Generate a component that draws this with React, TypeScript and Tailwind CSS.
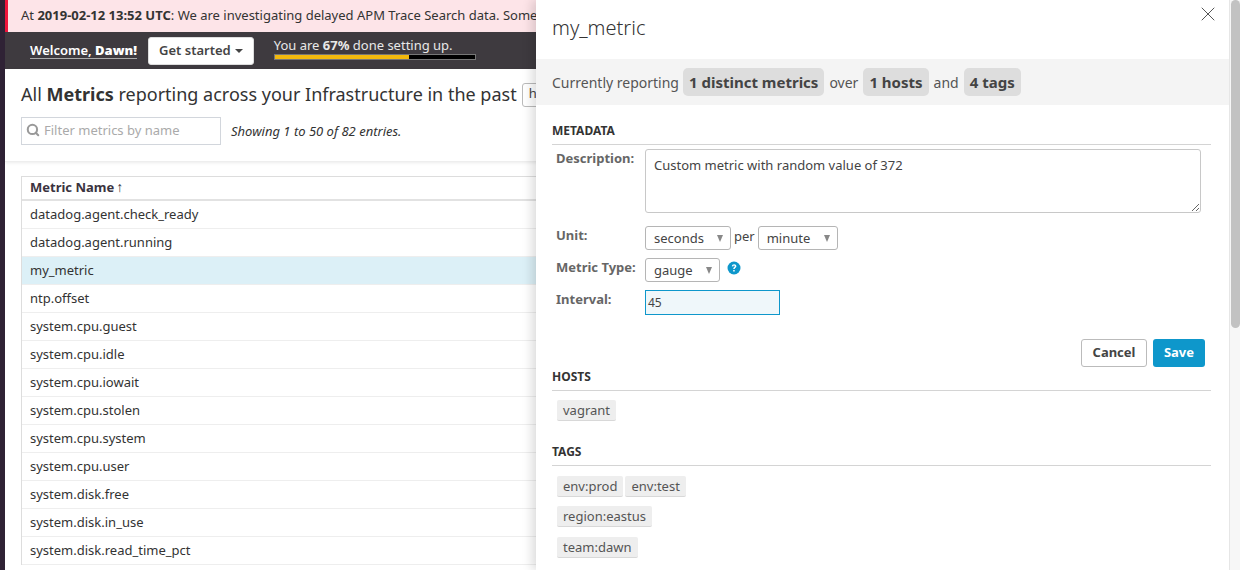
import { Search, X } from "lucide-react";

const metrics = [
  "datadog.agent.check_ready",
  "datadog.agent.running",
  "my_metric",
  "ntp.offset",
  "system.cpu.guest",
  "system.cpu.idle",
  "system.cpu.iowait",
  "system.cpu.stolen",
  "system.cpu.system",
  "system.cpu.user",
  "system.disk.free",
  "system.disk.in_use",
  "system.disk.read_time_pct",
];

function Select({ value, width }: { value: string; width: string }) {
  return (
    <div className={`flex h-6 ${width} items-center justify-between rounded-[3px] border border-[#b5b5b5] bg-white pl-[8px] pr-[7px] text-[13px] text-[#444]`}>
      <span className="mt-[1px]">{value}</span>
      <span className="mt-[1px] h-0 w-0 border-x-[3px] border-t-[7px] border-x-transparent border-t-[#888]" />
    </div>
  );
}

function Tag({ label }: { label: string }) {
  return (
    <span className="h-[21px] rounded-[2px] border-b border-[#d8d8d8] bg-[#eeeeee] px-[6px] text-[13px] leading-[20px] text-[#555]">
      {label}
    </span>
  );
}

function Pill({ label }: { label: string }) {
  return <span className="rounded-[5px] bg-[#dddddd] px-[6px] py-[3px] text-[15px] font-bold text-[#444]">{label}</span>;
}

function SectionHead({ title }: { title: string }) {
  return <h3 className="border-b border-[#d4d4d4] pt-[1px] pb-[4px] text-[12px] leading-[18px] font-bold text-[#333]">{title}</h3>;
}

function MetricsList() {
  return (
    <div className="relative h-full w-[536px] shrink-0 overflow-hidden bg-white">
      <div className="flex h-full">
        <div className="w-[5px] shrink-0 bg-[#2f2235]" />
        <div className="w-[700px] shrink-0">
          <div className="h-8 border-l-[3px] border-[#f0143c] bg-[#fde4e8] pl-[13px] text-[13px] leading-[30px] text-[#333]">
            At <b>2019-02-12 13:52 UTC</b>: We are investigating delayed APM Trace Search data. Some
          </div>
          <div className="flex h-[37px] items-center bg-[#3e3a3f] pl-[25px]">
            <span className="border-b border-[#aaa] text-[13px] leading-[16px] font-semibold text-white">
              Welcome, <b>Dawn!</b>
            </span>
            <button className="ml-[11px] flex h-[28px] items-center rounded-[3px] border border-[#ddd] bg-white px-[10px] text-[13px] font-semibold text-[#444]">
              Get started
              <span className="ml-[4px] h-0 w-0 border-x-[4px] border-t-[4px] border-x-transparent border-t-[#444]" />
            </button>
            <div className="ml-[20px] -mt-[5px]">
              <div className="text-[13px] leading-[18px] text-[#e8e8e8]">
                You are <b>67%</b> done setting up.
              </div>
              <div className="h-[6px] w-[202px] border border-[#777] bg-black">
                <div className="h-full w-[67%] bg-[#f2b90d]" />
              </div>
            </div>
          </div>
          <div className="h-[93px] border-b border-[#eeeeee] pl-[16px] shadow-[0_1px_3px_rgba(0,0,0,0.08)]">
            <div className="flex h-[48px] items-center pt-[2px]">
              <span className="text-[18px] text-[#333]">
                All <b>Metrics</b> reporting across your Infrastructure in the past
              </span>
              <span className="ml-[5px] mt-[2px] h-6 w-16 rounded-[3px] border border-[#bbb] pl-[6px] text-[13px] text-[#444]">h</span>
            </div>
            <div className="flex items-center">
              <div className="flex h-[28px] w-[200px] items-center border border-[#d2d6dc] pl-[4px]">
                <Search size={14} strokeWidth={3.5} className="-mt-[3px] text-[#999]" />
                <span className="ml-[4px] text-[13px] text-[#aaa]">Filter metrics by name</span>
              </div>
              <span className="ml-[10px] text-[13px] leading-[18px] text-[#333] italic">Showing 1 to 50 of 82 entries.</span>
            </div>
          </div>
          <div className="ml-[16px] mt-[14px] border border-b-0 border-[#dddddd]">
            <div className="flex h-[24px] items-center border-b-2 border-[#e2e2e2] pl-[8px] text-[13px] font-bold text-[#3a3340]">
              Metric Name
              <span className="ml-[2px] -mt-[4px] text-[14px] font-normal">↑</span>
            </div>
            {metrics.map((m) => (
              <div
                key={m}
                className={`h-[28px] border-b border-[#eeeeee] pl-[8px] text-[13px] leading-[27px] text-[#333] ${m === "my_metric" ? "bg-[#dcf0f7]" : ""}`}
              >
                {m}
              </div>
            ))}
          </div>
        </div>
      </div>
    </div>
  );
}

function DetailPanel() {
  return (
    <div className="relative z-10 flex h-full min-w-0 flex-1 overflow-hidden bg-white shadow-[-4px_0_10px_rgba(0,0,0,0.14)]">
      <div className="relative min-w-0 flex-1">
        <X size={24} strokeWidth={1} className="absolute top-[2px] right-[9px] text-[#555]" />
        <h2 className="h-[59px] pl-4 pt-[13px] text-[20px] leading-[30px] font-light text-[#333]">my_metric</h2>
        <div className="flex h-[46px] items-center gap-[5px] bg-[#f4f4f4] pl-4 text-[14px] text-[#555]">
          <span className="-mr-[1px]">Currently reporting</span>
          <Pill label="1 distinct metrics" />
          <span>over</span>
          <Pill label="1 hosts" />
          <span>and</span>
          <Pill label="4 tags" />
        </div>
        <div className="pl-4 pr-[18px] pt-[16px]">
          <SectionHead title="METADATA" />
          <div className="mt-[4px] grid grid-cols-[93px_1fr] text-[13px] font-bold text-[#666]">
            <div className="pl-[4px] leading-[18px]">Description:</div>
            <div className="relative mr-[10px] h-[64px] rounded-[3px] border border-[#c8c8c8] px-[8px] pt-[6px] text-[13px] font-normal leading-[18px] text-[#444]">
              Custom metric with random value of 372
              <svg width="8" height="8" viewBox="0 0 8 8" className="absolute right-[1px] bottom-[1px]">
                <path d="M1 8 L8 1 M5 8 L8 5" stroke="#666" strokeWidth="1" fill="none" />
              </svg>
            </div>
            <div className="mt-[13px] pl-[4px] leading-[18px]">Unit:</div>
            <div className="mt-[13px] flex h-6 items-center font-normal">
              <Select value="seconds" width="w-[86px]" />
              <span className="mx-[3px] -mt-[3px] text-[#444]">per</span>
              <Select value="minute" width="w-[80px]" />
            </div>
            <div className="mt-[8px] pl-[4px] leading-[18px]">Metric Type:</div>
            <div className="mt-[8px] flex h-6 items-start font-normal">
              <Select value="gauge" width="w-[75px]" />
              <svg width="14" height="14" viewBox="0 0 14 14" className="ml-[7px] mt-[3px]">
                <circle cx="7" cy="7" r="6.5" fill="#0e97cb" />
                <path d="M4.8 5.3 C4.9 3.9 6 3.2 7.1 3.2 C8.4 3.2 9.4 4 9.4 5.2 C9.4 6.6 7.7 6.7 7.7 8.1 L6.2 8.1 C6.2 6.2 7.8 6.2 7.8 5.3 C7.8 4.8 7.5 4.5 7 4.5 C6.5 4.5 6.2 4.9 6.2 5.4 Z M6.2 9 H7.7 V10.5 H6.2 Z" fill="#fff" />
              </svg>
            </div>
            <div className="mt-[8px] pl-[4px] leading-[18px]">Interval:</div>
            <div className="mt-[8px] flex h-[25px] w-[135px] items-center border border-[#0e97cb] bg-[#eff7fa] pl-[2px] text-[12px] font-normal text-[#444]">
              45
            </div>
          </div>
          <div className="mt-[24px] flex justify-end gap-[6px] pr-[6px]">
            <button className="h-7 w-[66px] rounded-[3px] border border-[#bbb] bg-white text-[13px] font-bold text-[#444]">Cancel</button>
            <button className="h-7 w-[52px] rounded-[3px] bg-[#0e97cb] text-[13px] font-bold text-white">Save</button>
          </div>
          <SectionHead title="HOSTS" />
          <div className="mt-[9px] flex pl-[5px]">
            <Tag label="vagrant" />
          </div>
          <div className="mt-[21px]">
            <SectionHead title="TAGS" />
          </div>
          <div className="mt-[10px] flex gap-[2px] pl-[5px]">
            <Tag label="env:prod" />
            <Tag label="env:test" />
          </div>
          <div className="mt-[9px] flex pl-[5px]">
            <Tag label="region:eastus" />
          </div>
          <div className="mt-[10px] flex pl-[5px]">
            <Tag label="team:dawn" />
          </div>
        </div>
      </div>
      <div className="w-[11px] shrink-0 border-l border-[#e6e6e6] bg-[#f7f7f7] pl-[1px]">
        <div className="h-[328px] w-[9px] rounded-full bg-[#c2c2c2]" />
      </div>
    </div>
  );
}

export default function App() {
  return (
    <div className="flex h-[570px] w-[1240px] overflow-hidden bg-white font-['Noto_Sans',sans-serif]">
      <MetricsList />
      <DetailPanel />
    </div>
  );
}
